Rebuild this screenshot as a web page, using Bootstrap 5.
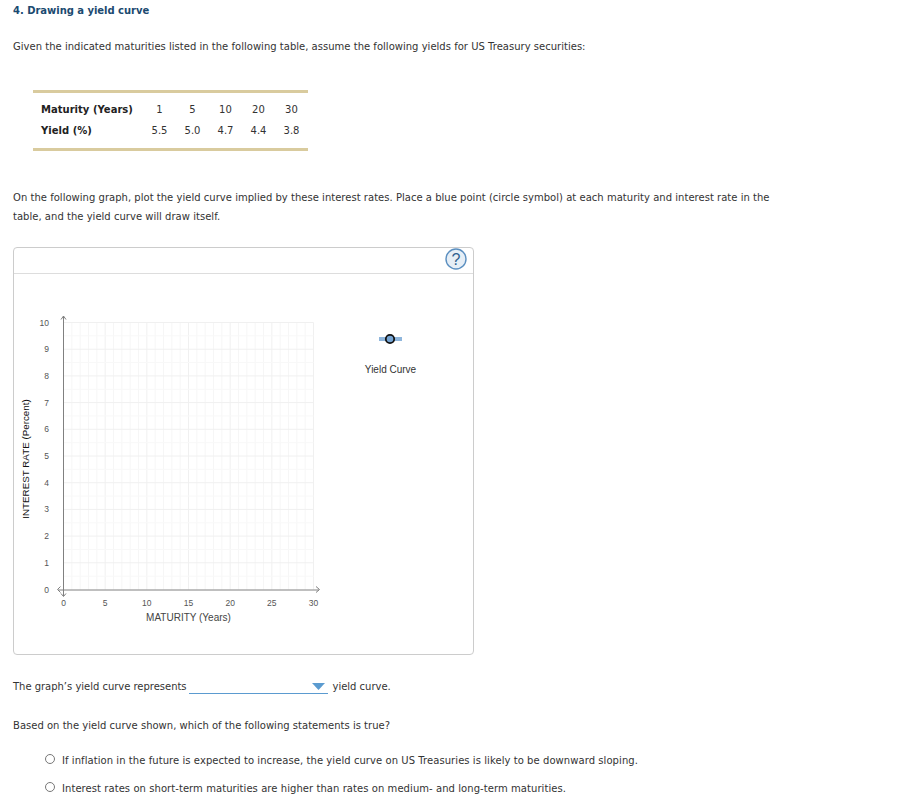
<!DOCTYPE html>
<html lang="en"><head><meta charset="utf-8"><title>Drawing a yield curve</title>
<link href="https://cdn.jsdelivr.net/npm/bootstrap@5.3.0/dist/css/bootstrap.min.css" rel="stylesheet">
<style>
body{font-family:"DejaVu Sans",Verdana,sans-serif;font-size:10px;line-height:14px;color:#333;background:#fff;padding:4px 13px 0;overflow:hidden;letter-spacing:.018px}
.q-title{font-size:10px;font-weight:700;color:#1b4a70;margin:0 0 22px;line-height:14px;letter-spacing:-.03px}
.q-text{margin:0}
.para2{line-height:19px;margin:37px 0 0;width:770px;letter-spacing:.025px}
.tbl-wrap{width:275px;margin:36px 0 0 20px;border-top:3px solid #d9cb9e;border-bottom:3px solid #d9cb9e;padding:6px 0 7px 8px}
.tbl-wrap table{border-collapse:collapse;width:100%}
.tbl-wrap th{font-weight:700;color:#222;text-align:left;padding:0;height:21px}
.tbl-wrap td{text-align:center;padding:0;width:33px}
.graph-box{width:461px;height:408px;margin-top:21px;border:1px solid #ccc;border-radius:4px;overflow:hidden}
.graph-head{height:26px;border-bottom:1px solid #ddd;padding:0 6px 0 0}
.graph-box svg text{font-family:"Liberation Sans",Arial,sans-serif;letter-spacing:0}
.sel-line{width:139px;height:14px;border-bottom:1px solid #5b9bd0;margin:0 5px 0 2px;padding-right:3px}
.sel-row{margin-top:25px;height:14px;letter-spacing:-.02px}
.para3{margin:25px 0 0}
.opts{margin:14px 0 0 32px;letter-spacing:.065px}
.opt{height:28px;gap:7px}
.opt-radio{width:10px;height:10px;border:1px solid #777;border-radius:50%;flex:none;margin-top:-4px;background:#fff}
</style></head><body>
<h1 class="q-title">4. Drawing a yield curve</h1>
<p class="q-text">Given the indicated maturities listed in the following table, assume the following yields for US Treasury securities:</p>
<div class="tbl-wrap"><table>
<tr><th>Maturity (Years)</th><td>1</td><td>5</td><td>10</td><td>20</td><td>30</td></tr>
<tr><th>Yield (%)</th><td>5.5</td><td>5.0</td><td>4.7</td><td>4.4</td><td>3.8</td></tr>
</table></div>
<p class="para2">On the following graph, plot the yield curve implied by these interest rates. Place a blue point (circle symbol) at each maturity and interest rate in the table, and the yield curve will draw itself.</p>
<div class="graph-box">
<div class="graph-head d-flex justify-content-end">
<svg width="22" height="22" viewBox="0 0 22 22" role="img" aria-label="Help"><circle cx="11" cy="11" r="10" fill="#e6eef6" stroke="#5b8fc0" stroke-width="1.4"/><text x="11" y="16.500" text-anchor="middle" font-size="16" fill="#2f5f8f">?</text></svg>
</div>
<svg id="plot" width="459" height="381" viewBox="14 274 459 381"></svg>
</div>
<div class="sel-row d-flex align-items-center"><span>The graph’s yield curve represents</span>
<span class="sel-line d-flex justify-content-end align-items-center"><svg width="13" height="7" viewBox="0 0 13 7"><path d="M0 0H13L6.500 7Z" fill="#5b9bd0"/></svg></span>
<span>yield curve.</span></div>
<p class="para3">Based on the yield curve shown, which of the following statements is true?</p>
<div class="opts">
<div class="opt d-flex align-items-center"><span class="opt-radio"></span><span>If inflation in the future is expected to increase, the yield curve on US Treasuries is likely to be downward sloping.</span></div>
<div class="opt d-flex align-items-center"><span class="opt-radio"></span><span>Interest rates on short-term maturities are higher than rates on medium- and long-term maturities.</span></div>
</div>
<script>
var s='',x0=63.5,x1=313.5,y0=589.5,y1=322.5;
for(var i=1;i<=30;i++){var x=x0+(x1-x0)*i/30;s+='<path d="M'+x+' '+y1+'V'+y0+'" stroke="'+(i%5?'#f6f6f6':'#f0f0f0')+'"/>';}
for(i=1;i<=20;i++){var y=y0-(y0-y1)*i/20;s+='<path d="M'+x0+' '+y+'H'+x1+'" stroke="'+(i%2?'#f8f8f8':'#f0f0f0')+'"/>';}
s+='<path d="M63.5 316V596M58 590H319" stroke="#808080" fill="none"/>';
s+='<path d="M61 319.500L63.500 316L66 319.500M60.500 592.500L57.500 589.500L60.500 586.500M316 586.500L319.500 589.500L316 592.500M61 593.500L63.500 596.500L66 593.500" stroke="#808080" fill="none"/>';
for(i=0;i<=10;i++){s+='<text x="49" y="'+(y0-(y0-y1)*i/10+3)+'" text-anchor="end" font-size="8.5" fill="#555">'+i+'</text>';}
for(i=0;i<=6;i++){s+='<text x="'+(x0+(x1-x0)*i/6)+'" y="606" text-anchor="middle" font-size="8.5" fill="#555">'+i*5+'</text>';}
s+='<text x="188.500" y="621" text-anchor="middle" font-size="10" fill="#444">MATURITY (Years)</text>';
s+='<text transform="translate(29 459) rotate(-90)" text-anchor="middle" font-size="9.800" fill="#111">INTEREST RATE (Percent)</text>';
s+='<path d="M379 339H402" stroke="#8fb6dc" stroke-width="4"/><circle cx="390" cy="339" r="4.200" fill="#76a5d4" stroke="#111" stroke-width="1.800"/>';
s+='<text x="390.500" y="373" text-anchor="middle" font-size="10" fill="#333">Yield Curve</text>';
document.getElementById('plot').innerHTML=s;
</script>
<script src="https://cdn.jsdelivr.net/npm/bootstrap@5.3.0/dist/js/bootstrap.bundle.min.js"></script>
</body></html>
